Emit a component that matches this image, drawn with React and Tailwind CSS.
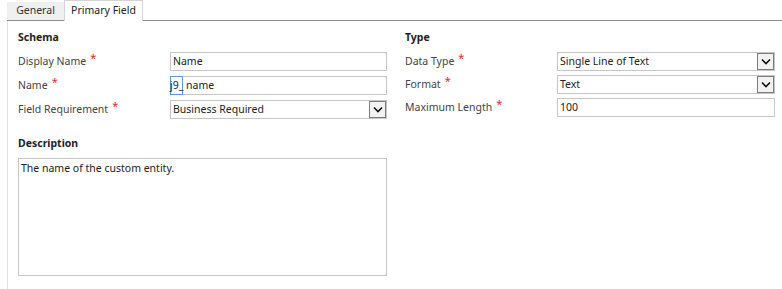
import React from 'react';

const font = { fontFamily: '"Segoe UI", "Noto Sans", sans-serif' };

function Req() {
  return <span className="ml-[4px] text-[#e8262d] text-[11px] leading-none relative top-[-4px]">*</span>;
}

function Label({ children, required }) {
  return (
    <div className="flex items-center h-[19px] text-[10.5px] text-[#444444]">
      {children}
      {required && <Req />}
    </div>
  );
}

function TextBox({ value }) {
  return (
    <div className="h-[19px] border border-[#c6c6c6] bg-white flex items-center px-[2px] text-[10.5px] text-[#222222]">
      {value}
    </div>
  );
}

function Chevron() {
  return (
    <svg width="10" height="7" viewBox="0 0 10 7" fill="none">
      <path d="M1 1.5 L5 5.5 L9 1.5" stroke="#111" strokeWidth="1.6" />
    </svg>
  );
}

function Select({ value }) {
  return (
    <div className="h-[19px] border border-[#c6c6c6] bg-white flex items-center text-[10.5px] text-[#222222]">
      <span className="flex-1 px-[2px]">{value}</span>
      <span className="w-[17px] h-[17px] border border-[#7c7c7c] bg-[#f2f2f2] flex items-center justify-center">
        <Chevron />
      </span>
    </div>
  );
}

function Row({ label, required, children }) {
  return (
    <div className="flex items-center h-[19px]">
      <div className="w-[152px]">
        <Label required={required}>{label}</Label>
      </div>
      <div className="flex-1">{children}</div>
    </div>
  );
}

export default function App() {
  return (
    <div className="w-[782px] h-[289px] bg-white flex flex-col overflow-hidden" style={font}>
      {/* tab strip */}
      <div className="h-[21px] flex items-end pl-[7px]">
        <div className="h-[19px] w-[57px] bg-[#f0f0f0] border-b border-[#8c8c94] flex items-center justify-center text-[10.5px] text-[#333333]">
          General
        </div>
        <div className="h-[21px] w-[79px] bg-white border border-b-0 border-[#d4d4d4] flex items-center justify-center text-[10.5px] text-[#222222]">
          Primary Field
        </div>
        <div className="flex-1 border-b border-[#8c8c94]" />
      </div>

      {/* body */}
      <div className="flex-1 ml-[7px] border-l border-[#e2e2e2] pl-[10px] pt-[9px]">
        <div className="flex">
          <div className="w-[369px]">
            <div className="h-[16px] flex items-center text-[10.5px] font-bold text-[#222222]">Schema</div>
            <div className="flex flex-col gap-[5px] mt-[6px]">
              <Row label="Display Name" required>
                <TextBox value="Name" />
              </Row>
              <Row label="Name" required>
                <div className="flex h-[19px]">
                  <div className="relative w-[13px] h-[19px] border border-[#5b9bd5] text-[10.5px] text-[#222222] flex items-center">
                    <span className="absolute left-[-1px]">j9_</span>
                  </div>
                  <div className="flex-1 h-[19px] border border-l-0 border-[#c6c6c6] flex items-center pl-[3px] text-[10.5px] text-[#222222]">
                    name
                  </div>
                </div>
              </Row>
              <Row label="Field Requirement" required>
                <Select value="Business Required" />
              </Row>
            </div>
            <div className="h-[16px] flex items-center text-[10.5px] font-bold text-[#222222] mt-[17px]">Description</div>
            <div className="mt-[6px] h-[118px] border border-[#c6c6c6] px-[2px] pt-[2px] text-[10.5px] text-[#222222]">
              The name of the custom entity.
            </div>
          </div>

          <div className="w-[370px] ml-[18px]">
            <div className="h-[16px] flex items-center text-[10.5px] font-bold text-[#222222]">Type</div>
            <div className="flex flex-col gap-[4px] mt-[6px]">
              <Row label="Data Type" required>
                <Select value="Single Line of Text" />
              </Row>
              <Row label="Format" required>
                <Select value="Text" />
              </Row>
              <Row label="Maximum Length" required>
                <TextBox value="100" />
              </Row>
            </div>
          </div>
        </div>
      </div>
    </div>
  );
}
